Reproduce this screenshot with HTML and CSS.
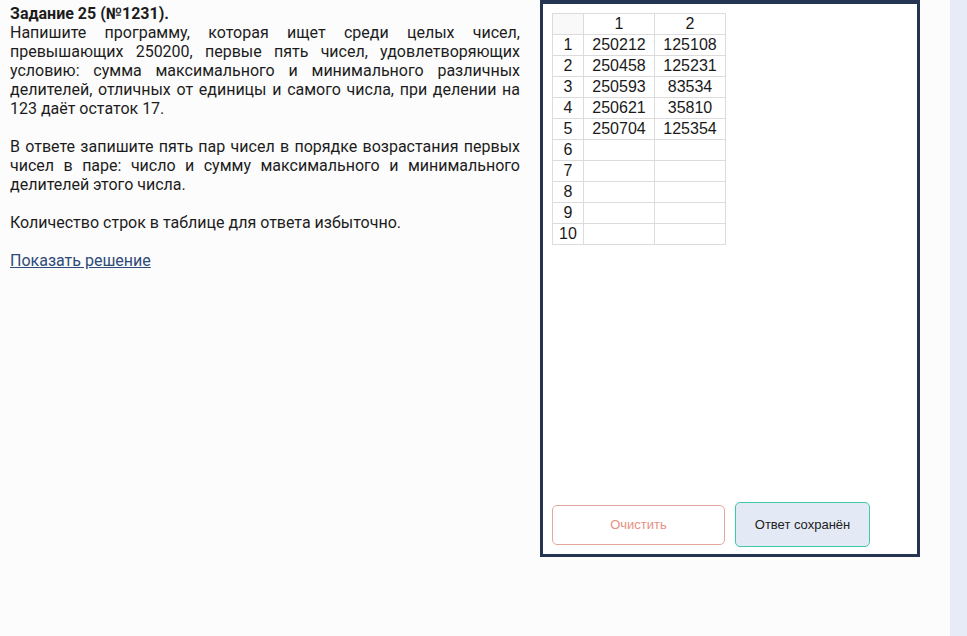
FILE: index.html
```html
<!DOCTYPE html>
<html lang="ru">
<head>
<meta charset="utf-8">
<link rel="stylesheet" href="styles.css">
</head>
<body>
<div class="page">
  <div class="task">
    <div class="title">Задание 25 (№1231).</div>
    <p class="para">Напишите программу, которая ищет среди целых чисел, превышающих 250200, первые пять чисел, удовлетворяющих условию: сумма максимального и минимального различных делителей, отличных от единицы и самого числа, при делении на 123 даёт остаток 17.</p>
    <p class="para gap">В ответе запишите пять пар чисел в порядке возрастания первых чисел в паре: число и сумму максимального и минимального делителей этого числа.</p>
    <p class="para gap">Количество строк в таблице для ответа избыточно.</p>
    <p class="para gap"><a class="link" href="#">Показать решение</a></p>
  </div>
  <div class="answer">
    <table class="grid">
      <tr><th class="corner"></th><th class="col">1</th><th class="col">2</th></tr>
      <tr><th>1</th><td>250212</td><td>125108</td></tr>
      <tr><th>2</th><td>250458</td><td>125231</td></tr>
      <tr><th>3</th><td>250593</td><td>83534</td></tr>
      <tr><th>4</th><td>250621</td><td>35810</td></tr>
      <tr><th>5</th><td>250704</td><td>125354</td></tr>
      <tr><th>6</th><td></td><td></td></tr>
      <tr><th>7</th><td></td><td></td></tr>
      <tr><th>8</th><td></td><td></td></tr>
      <tr><th>9</th><td></td><td></td></tr>
      <tr><th>10</th><td></td><td></td></tr>
    </table>
    <div class="buttons">
      <button class="btn clear">Очистить</button>
      <button class="btn saved">Ответ сохранён</button>
    </div>
  </div>
  <div class="side"></div>
</div>
</body>
</html>
```
FILE: styles.css
```css
html, body {
  margin: 0;
  padding: 0;
  height: 100%;
  background: #fcfcfc;
}
.page {
  display: flex;
  height: 636px;
  overflow: hidden;
}
.task {
  width: 510px;
  margin-left: 10px;
  font-family: Roboto, "Liberation Sans", sans-serif;
  font-size: 16px;
  line-height: 19px;
  color: #1c1c1c;
}
.title {
  font-weight: bold;
  margin-top: 4px;
}
.para {
  margin: 0;
  text-align: justify;
}
.para.gap {
  margin-top: 19px;
}
.link {
  color: #2d4a78;
  text-decoration: underline;
}
.answer {
  margin-left: 20px;
  width: 380px;
  height: 557px;
  box-sizing: border-box;
  background: #ffffff;
  border: 3px solid #253551;
  border-top-width: 4px;
  padding: 9px 9px 7px 9px;
  display: flex;
  flex-direction: column;
}
.grid {
  align-self: flex-start;
  border-collapse: collapse;
  font-family: "Liberation Sans", Arial, sans-serif;
  font-size: 16px;
  color: #1a1a1a;
}
.grid th, .grid td {
  border: 1px solid #dcdcdc;
  height: 20px;
  padding: 0;
  text-align: center;
  font-weight: normal;
  line-height: 18px;
}
.grid th:first-child {
  width: 30px;
}
.grid td, .grid .col {
  width: 70px;
}
.grid .corner {
  background: #f9f9f9;
}
.buttons {
  margin-top: auto;
  display: flex;
  align-items: center;
  gap: 10px;
}
.btn {
  font-family: "Liberation Sans", Arial, sans-serif;
  font-size: 13px;
  border-radius: 5px;
  cursor: pointer;
}
.clear {
  width: 173px;
  height: 40px;
  background: #ffffff;
  border: 1px solid #e3a89d;
  color: #e8907f;
}
.saved {
  width: 135px;
  height: 45px;
  background: #e4eaf5;
  border: 1px solid #3ec8a6;
  color: #222222;
}
.side {
  margin-left: auto;
  width: 17px;
  background: #e6ebf7;
}
```
